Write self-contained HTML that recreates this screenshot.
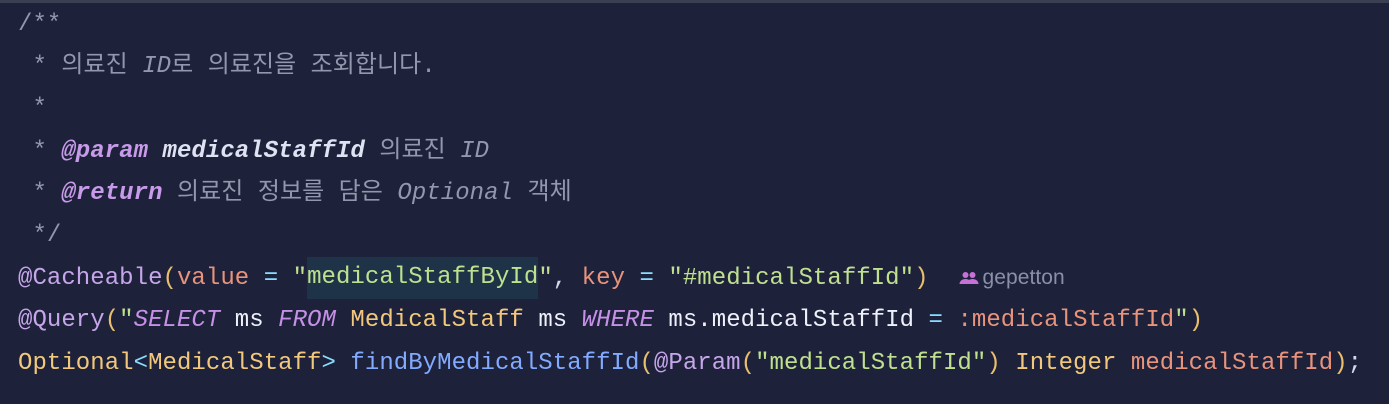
<!DOCTYPE html>
<html><head><meta charset="utf-8"><style>
html,body{margin:0;padding:0;}
body{width:1389px;height:404px;background:#1d2139;overflow:hidden;position:relative;}
.top{position:absolute;left:0;top:0;width:1389px;height:3px;background:#3b3f52;}
.code{position:absolute;left:18px;top:4px;font-family:"Liberation Mono","Noto Sans CJK KR",monospace;font-size:24px;line-height:42.2px;letter-spacing:0.05px;white-space:pre;color:#d6d9ea;}
.c{color:#9197ad}
.tag{color:#c89bea;font-weight:bold;font-style:italic}
.pn{color:#dfe2f3;font-weight:bold;font-style:italic}
.i{font-style:italic}
.an{color:#c6a6ea}
.p{color:#e9be6e}
.at{color:#e8937c}
.op{color:#89ddff}
.s{color:#bfe08f}
.kw{color:#c590e6;font-style:italic}
.t{color:#f2c97c}
.f{color:#82aaff}
.w{color:#eef0fa}
.hl{background:#1e3348;display:inline-block;height:42px;vertical-align:top}
.blame{font-family:"Liberation Sans",sans-serif;font-size:21px;color:#8a90a8;margin-left:30px}
</style></head><body>
<div class="top"></div>
<div class="code"><span class="c">/**</span>
<span class="c"> * 의료진 <span class="i">ID</span>로 의료진을 조회합니다.</span>
<span class="c"> *</span>
<span class="c"> * </span><span class="tag">@param</span> <span class="pn">medicalStaffId</span><span class="c"> 의료진 <span class="i">ID</span></span>
<span class="c"> * </span><span class="tag">@return</span><span class="c"> 의료진 정보를 담은 <span class="i">Optional</span> 객체</span>
<span class="c"> */</span>
<span class="an">@Cacheable</span><span class="p">(</span><span class="at">value</span> <span class="op">=</span> <span class="s">"<span class="hl">medicalStaffById</span>"</span>, <span class="at">key</span> <span class="op">=</span> <span class="s">"#medicalStaffId"</span><span class="p">)</span><span class="blame"><svg width="20" height="14" viewBox="0 0 20 14" style="vertical-align:-1px;margin-right:4px"><circle cx="6.5" cy="4" r="3" fill="#c870d8"/><circle cx="13.5" cy="4" r="3" fill="#c870d8"/><path d="M0.5 13c0-3 2.7-5 6-5s6 2 6 5z" fill="#c870d8"/><path d="M8 13c0-3 2.2-5 5.5-5s6 2 6 5z" fill="#c870d8"/></svg>gepetton</span>
<span class="an">@Query</span><span class="p">(</span><span class="s">"</span><span class="kw">SELECT</span> <span class="w">ms</span> <span class="kw">FROM</span> <span class="t">MedicalStaff</span> <span class="w">ms</span> <span class="kw">WHERE</span> <span class="w">ms.medicalStaffId</span> <span class="op">=</span> <span class="at">:medicalStaffId</span><span class="s">"</span><span class="p">)</span>
<span class="t">Optional</span><span class="op">&lt;</span><span class="t">MedicalStaff</span><span class="op">&gt;</span> <span class="f">findByMedicalStaffId</span><span class="p">(</span><span class="an">@Param</span><span class="p">(</span><span class="s">"medicalStaffId"</span><span class="p">)</span> <span class="t">Integer</span> <span class="at">medicalStaffId</span><span class="p">)</span>;</div>
</body></html>
